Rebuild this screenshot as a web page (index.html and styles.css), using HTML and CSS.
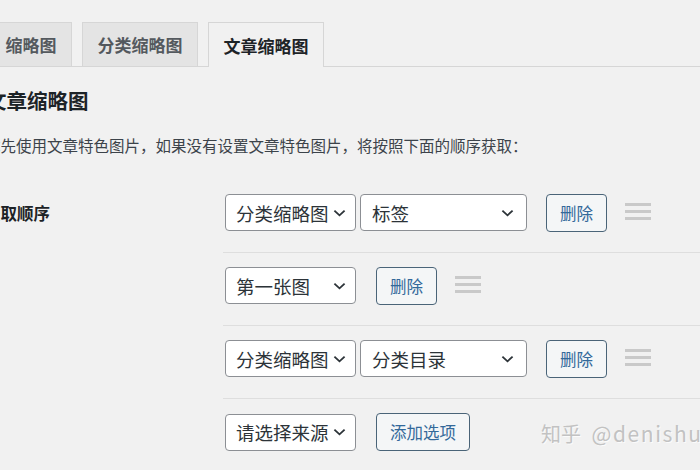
FILE: index.html
```html
<!DOCTYPE html>
<html lang="zh-CN">
<head>
<meta charset="utf-8">
<title>文章缩略图</title>
<link rel="stylesheet" href="styles.css">
</head>
<body>
<div class="page">
  <nav class="tabs">
    <a class="tab">缩略图</a>
    <a class="tab">分类缩略图</a>
    <a class="tab active">文章缩略图</a>
  </nav>
  <div class="content">
    <h2 class="title">文章缩略图</h2>
    <p class="desc">优先使用文章特色图片，如果没有设置文章特色图片，将按照下面的顺序获取：</p>
    <div class="form">
      <div class="label">获取顺序</div>
      <div class="rows">
        <div class="row">
          <div class="select s1"><span>分类缩略图</span><svg class="chev" viewBox="0 0 14 8"><polyline points="1.5,1.5 7,6.5 12.5,1.5"/></svg></div>
          <div class="select s2"><span>标签</span><svg class="chev" viewBox="0 0 14 8"><polyline points="1.5,1.5 7,6.5 12.5,1.5"/></svg></div>
          <button class="btn">删除</button>
          <div class="handle"><i></i><i></i><i></i></div>
        </div>
        <div class="row">
          <div class="select s1"><span>第一张图</span><svg class="chev" viewBox="0 0 14 8"><polyline points="1.5,1.5 7,6.5 12.5,1.5"/></svg></div>
          <button class="btn">删除</button>
          <div class="handle"><i></i><i></i><i></i></div>
        </div>
        <div class="row">
          <div class="select s1"><span>分类缩略图</span><svg class="chev" viewBox="0 0 14 8"><polyline points="1.5,1.5 7,6.5 12.5,1.5"/></svg></div>
          <div class="select s2"><span>分类目录</span><svg class="chev" viewBox="0 0 14 8"><polyline points="1.5,1.5 7,6.5 12.5,1.5"/></svg></div>
          <button class="btn">删除</button>
          <div class="handle"><i></i><i></i><i></i></div>
        </div>
        <div class="row">
          <div class="select s1"><span>请选择来源</span><svg class="chev" viewBox="0 0 14 8"><polyline points="1.5,1.5 7,6.5 12.5,1.5"/></svg></div>
          <button class="btn add">添加选项</button>
        </div>
      </div>
    </div>
  </div>
  <div class="watermark">知乎 <span class="handle-name">@denishu</span></div>
</div>
</body>
</html>
```

FILE: styles.css
```css
* { box-sizing: border-box; }
html, body {
  margin: 0;
  padding: 0;
  background: #f1f1f1;
  overflow: hidden;
}
body {
  width: 700px;
  height: 470px;
  font-family: "Noto Sans CJK SC", "Noto Sans", sans-serif;
  color: #1d2327;
}
.page {
  position: relative;
  width: 700px;
  height: 470px;
  overflow: hidden;
}
.tabs {
  display: flex;
  gap: 10px;
  padding-top: 22px;
  margin-left: -10px;
  border-bottom: 1px solid #d6d6d6;
  height: 67px;
}
.tab {
  display: flex;
  align-items: center;
  height: 44px;
  padding: 0 14.5px;
  font-size: 17px;
  font-weight: 700;
  color: #54595e;
  background: #e4e4e4;
  border: 1px solid #d6d6d6;
  border-bottom: none;
  white-space: nowrap;
}
.tab.active {
  background: #f1f1f1;
  color: #1d2327;
  height: 45px;
  margin-bottom: -1px;
}
.content {
  margin-left: -14px;
}
.title {
  margin: 19px 0 0 0;
  font-size: 20.5px;
  line-height: 28px;
  font-weight: 700;
  color: #1d2327;
}
.desc {
  margin: 20px 0 0 -1px;
  font-size: 15.5px;
  line-height: 22px;
  color: #3c434a;
}
.form {
  display: flex;
  margin-top: 24px;
}
.label {
  width: 238px;
  flex: none;
  height: 51px;
  padding-top: 14px;
  display: flex;
  align-items: center;
  margin-left: -2px;
  font-size: 16.5px;
  font-weight: 700;
  color: #1d2327;
}
.rows {
  flex: 1;
  margin-left: 1px;
}
.row {
  display: flex;
  align-items: center;
  padding: 14px 0 21px 2px;
  border-bottom: 1px solid #dedede;
  height: 73px;
}
.row:last-child {
  border-bottom: none;
}
.select {
  display: flex;
  align-items: center;
  justify-content: space-between;
  height: 37px;
  padding: 0 9px 0 10px;
  background: #fff;
  border: 1px solid #8c8f94;
  border-radius: 4px;
  font-size: 18.5px;
  color: #2c3338;
  flex: none;
}
.select.s1 { width: 131px; }
.select.s2 { width: 167px; margin-left: 4px; padding-right: 12px; padding-left: 11px; }
.chev {
  width: 13px;
  height: 8px;
  flex: none;
}
.chev polyline {
  fill: none;
  stroke: #2c3338;
  stroke-width: 2;
}
.btn {
  margin-left: 20px;
  height: 38px;
  width: 61px;
  padding: 0;
  background: #f4f6f7;
  border: 1px solid #4a6478;
  border-radius: 4px;
  font-family: "Noto Sans CJK SC", "Noto Sans", sans-serif;
  font-size: 16.5px;
  color: #33699a;
  flex: none;
}
.select.s2 + .btn { margin-left: 19px; }
.btn.add { width: 94px; }
.handle {
  margin-left: 18px;
  width: 26px;
  display: flex;
  flex-direction: column;
  gap: 4px;
  margin-top: -3px;
}
.handle i {
  display: block;
  height: 3px;
  background: #c9c9c9;
}
.watermark {
  position: absolute;
  left: 541px;
  top: 419px;
  font-family: "Noto Sans CJK SC", "Noto Sans", sans-serif;
  font-size: 20px;
  line-height: 28px;
  color: #c2c2c2;
  white-space: nowrap;
  text-shadow: 1px 1px 0 #fbfbfb;
}
.handle-name {
  margin-left: 6px;
  letter-spacing: 1.6px;
  font-size: 21px;
}
```
